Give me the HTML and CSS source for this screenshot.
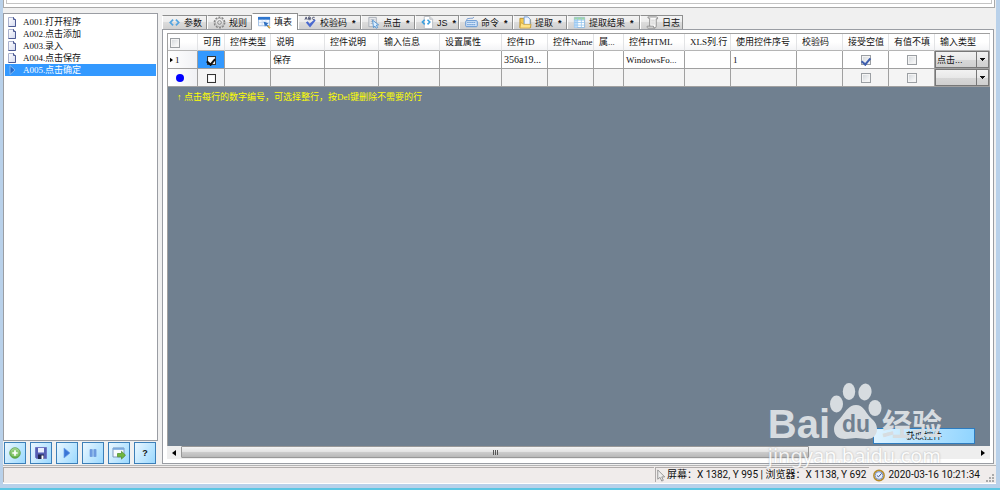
FILE: index.html
```html
<!DOCTYPE html>
<html lang="zh-CN">
<head>
<meta charset="utf-8">
<meta name="viewport" content="width=device-width, initial-scale=1">
<title>填表</title>
<link rel="stylesheet" href="styles.css">
</head>
<body>
<svg class="defs" aria-hidden="true">
  <defs>
    <linearGradient id="page" x1="0" y1="0" x2="1" y2="1"><stop offset="0" stop-color="#fff"/><stop offset="1" stop-color="#d3d9ef"/></linearGradient>
    <linearGradient id="green" x1="0" y1="0" x2="0" y2="1"><stop offset="0" stop-color="#b4dba2"/><stop offset="1" stop-color="#55a83a"/></linearGradient>
    <symbol id="doc" viewBox="0 0 10 12"><path d="M1.500 1.500h5l2 2v7h-7z" fill="url(#page)" stroke="#a9b0cd"/><path d="M6.500 1.200v2.300h2v7h-7" fill="none" stroke="#4d5a94"/></symbol>
    <symbol id="play" viewBox="0 0 12 12"><path d="M3 1l6 5-6 5z" fill="#3975d6" stroke="#6fa0ea" stroke-width=".7"/></symbol>
    <symbol id="code" viewBox="0 0 14 14"><path d="M5.500 4L2.500 7l3 3M8.500 4l3 3-3 3" fill="none" stroke="#55a5e0" stroke-width="1.900"/></symbol>
  </defs>
</svg>
<div class="window">
  <div class="top-box"><div class="top-inner"></div></div>
  <main class="main">
    <aside class="side">
      <ul class="steps">
        <li><button class="step"><svg><use href="#doc"/></svg><span class="code">A001.</span>打开程序</button></li>
        <li><button class="step"><svg><use href="#doc"/></svg><span class="code">A002.</span>点击添加</button></li>
        <li><button class="step"><svg><use href="#doc"/></svg><span class="code">A003.</span>录入</button></li>
        <li><button class="step"><svg><use href="#doc"/></svg><span class="code">A004.</span>点击保存</button></li>
        <li><button class="step selected"><svg viewBox="0 0 10 12"><path d="M3 1.500l5 4.500-5 4.500z" fill="#2569c9" stroke="#83b9f3"/></svg><span class="code">A005.</span>点击确定</button></li>
      </ul>
      <div class="tools">
        <button class="tool" aria-label="添加"><svg viewBox="0 0 12 12"><circle cx="6" cy="6" r="5.300" fill="url(#green)" stroke="#5b9f48" stroke-width=".8"/><circle cx="6" cy="6" r="3.600" fill="#8bcb73"/><path d="M6 3.300v5.400M3.300 6h5.400" stroke="#fff" stroke-width="1.700"/></svg></button>
        <button class="tool" aria-label="保存"><svg viewBox="0 0 12 12"><path d="M.5.500h11v11h-10l-1-1z" fill="#5560b4" stroke="#6f78c5"/><path d="M3 1h6v4.500H3z" fill="#e8eefc"/><path d="M3 7.500h6V12H3z" fill="#20274f"/><path d="M6.500 8.500H8.500V12h-2z" fill="#fff"/></svg></button>
        <button class="tool" aria-label="运行"><svg><use href="#play"/></svg></button>
        <button class="tool" aria-label="暂停"><svg viewBox="0 0 12 12"><path d="M3 2.500h2.300v7H3zM6.800 2.500h2.300v7H6.800z" fill="#729fe2" stroke="#5486d2" stroke-width=".5"/></svg></button>
        <button class="tool" aria-label="导出"><svg class="big" viewBox="0 0 14 14"><path d="M1 2h11v9H1z" fill="#f7faff" stroke="#7e99bd"/><path d="M1 1.800h11v2H1z" fill="#79a8dc"/><path d="M5.500 7.500h4V5.300l4 3.900-4 3.900v-2.300h-4z" fill="#70b63d" stroke="#4b8d29" stroke-width=".7"/></svg></button>
        <button class="tool help" aria-label="帮助">?</button>
      </div>
    </aside>
    <section class="content">
      <div class="tabs" role="tablist">
        <button class="tab t45" role="tab"><svg><use href="#code"/></svg>参数</button>
        <button class="tab t45" role="tab"><svg viewBox="0 0 14 14" fill="none" stroke="#858585"><circle cx="7" cy="7" r="5.600" stroke-width="1.500" stroke-dasharray="2.200 1.300"/><circle cx="7" cy="7" r="4.500" stroke="#aaa"/><circle cx="7" cy="7" r="2"/></svg>规则</button>
        <button class="tab active" role="tab" aria-selected="true"><svg viewBox="0 0 14 14"><path d="M.5 1.500h12v9H.5z" fill="#f2f8ff" stroke="#9bbbe2"/><path d="M0 1h13v3H0z" fill="#2f76ce"/><path d="M4.500 4v6M8.500 4v6M1 7h11" stroke="#bdd2ed" stroke-width=".7"/><path d="M6 6l5.500 2-2 1 3.500 3.500-1 1-3.500-3.500-1 1.500z" fill="#2e6fc0"/><path d="M10.500 10.500l2.500 2.500" stroke="#e7ac3a" stroke-width="1.700"/></svg>填表</button>
        <button class="tab t63" role="tab"><svg viewBox="0 0 14 14"><path d="M1 4l1.300-3L3.600 4M1.600 3h1.500M5 4V1h1.500q1 .7 0 1.500H5h2q.8 1-.3 1.500zM11.500 1.500Q9 .5 9 2.500T11.500 3.600" fill="none" stroke="#444c6c" stroke-width=".9"/><path d="M2 7l2-1.300 2 2.700 5.500-4.800 1 1.200L6.500 12.500z" fill="#4969cf"/></svg>校验码 <b>*</b></button>
        <button class="tab t54" role="tab"><svg viewBox="0 0 14 14"><path d="M2 1.500h8v10H2z" fill="#e6e8eb" stroke="#a7adb7"/><path d="M4 4h4M4 6h3M4 8h2" stroke="#aeb5c0"/><path d="M6 4.500l6.500 5-2.500.4 1.500 2.500-1.600.8L8.600 11 7 12.500z" fill="#dbeeff" stroke="#4289cd" stroke-width=".9"/></svg>点击 <b>*</b></button>
        <button class="tab t44" role="tab"><svg viewBox="0 0 14 14"><path d="M3.500.5h6l3 3v10h-9z" fill="#fff" stroke="#b8bdc4"/><path d="M9.500.5v3h3" fill="#ddd" stroke="#b8bdc4"/><path d="M4 4L1.500 6.500 4 9M7 4l2.500 2.500L7 9" fill="none" stroke="#3b9fdf" stroke-width="1.700"/></svg>JS <b>*</b></button>
        <button class="tab t54" role="tab"><svg viewBox="0 0 14 14"><path d="M1.500 5q0-3 4-2.500t4-1.500" fill="none" stroke="#769acf"/><rect x=".8" y="5" width="12.400" height="6.500" rx="1" fill="#d5e6fa" stroke="#5990d0"/><path d="M2.500 7h9M2.500 9.300h9" stroke="#5d93d0" stroke-width="1.200" stroke-dasharray="1.400 .8"/></svg>命令 <b>*</b></button>
        <button class="tab t54" role="tab"><svg viewBox="0 0 14 14"><path d="M1 2.500h4l1 1.500h6.500v8.500H1z" fill="#f4c84d" stroke="#ba8f2c"/><path d="M5.500 1h4l2.500 2.500v6h-6.500z" fill="#eef5ff" stroke="#6d9bd4"/><path d="M2 7l3 2h8l-1 4H1z" fill="#ffe287" stroke="#c39933" stroke-width=".7"/></svg>提取 <b>*</b></button>
        <button class="tab t73" role="tab"><svg viewBox="0 0 14 14"><path d="M1.500 1.500h11v11h-11z" fill="#fff" stroke="#8db8df"/><path d="M1.500 1.500h11v2.500h-11z" fill="#a2d8a1"/><path d="M1.500 4h3v8.500h-3z" fill="#b8dafa"/><path d="M5 2v10.500M9 2v10.500M1.500 4.500h11M1.500 7h11M1.500 9.800h11" stroke="#8fc2ed" stroke-width=".8"/></svg>提取结果 <b>*</b></button>
        <button class="tab t42" role="tab"><svg viewBox="0 0 14 14"><path d="M4 11V2.500Q2 3 2 1h9q2 0 1.500 2H11v8q0 2-2 2H2q-1.800-1-.5-2H8q0 2 1.500 2" fill="#fafafa" stroke="#888"/><path d="M5.500 4.500h4M5.500 6.500h4M5.500 8.500h4" stroke="#ccc"/></svg>日志</button>
      </div>
      <div class="panel">
        <div class="grid">
          <table>
            <colgroup><col class="c30"><col class="c27"><col class="c46"><col class="c54"><col class="c54"><col class="c61"><col class="c62"><col class="c46"><col class="c46"><col class="c30"><col class="c61"><col class="c46"><col class="c66"><col class="c46"><col class="c46"><col class="c46"><col class="c55"></colgroup>
            <thead>
              <tr><th class="all"><input type="checkbox" aria-label="全选"></th><th>可用</th><th>控件类型</th><th>说明</th><th>控件说明</th><th>输入信息</th><th>设置属性</th><th>控件<span class="latin">ID</span></th><th>控件<span class="latin">Name</span></th><th>属<span class="latin">...</span></th><th>控件<span class="latin">HTML</span></th><th><span class="latin">XLS</span>列<span class="latin">.</span>行</th><th>使用控件序号</th><th>校验码</th><th>接受空值</th><th>有值不填</th><th>输入类型</th></tr>
            </thead>
            <tbody>
              <tr><td class="num"><svg class="mark" viewBox="0 0 4 6"><path d="M0 0l4 3-4 3z"/></svg><span class="latin">1</span></td><td class="mid current"><input class="flat" type="checkbox" checked aria-label="可用"></td><td></td><td>保存</td><td></td><td></td><td></td><td><span class="latin wide">356a19...</span></td><td></td><td></td><td><span class="latin">WindowsFo...</span></td><td></td><td><span class="latin">1</span></td><td></td><td class="mid"><input type="checkbox" checked aria-label="接受空值"></td><td class="mid"><input type="checkbox" aria-label="有值不填"></td><td class="pick"><select aria-label="输入类型"><option>点击...</option></select></td></tr>
              <tr class="new"><td class="num"><span class="dot"></span></td><td class="mid"><input class="flat" type="checkbox" aria-label="可用"></td><td></td><td></td><td></td><td></td><td></td><td></td><td></td><td></td><td></td><td></td><td></td><td></td><td class="mid"><input type="checkbox" aria-label="接受空值"></td><td class="mid"><input type="checkbox" aria-label="有值不填"></td><td class="pick"><select aria-label="输入类型"><option></option></select></td></tr>
            </tbody>
          </table>
          <p class="hint"><span class="up">↑</span>点击每行的数字编号，可选择整行，按<span class="latin">Del</span>键删除不需要的行</p>
          <button class="fetch">获取控件</button>
        </div>
        <div class="scroll">
          <button class="arrow" aria-label="向左"><svg viewBox="0 0 4 6"><path d="M4 0L0 3l4 3z"/></svg></button>
          <div class="track"><div class="thumb"><i></i><i></i><i></i></div></div>
          <button class="arrow" aria-label="向右"><svg viewBox="0 0 4 6"><path d="M0 0l4 3-4 3z"/></svg></button>
        </div>
        <div class="watermark">
          <div class="brand">
            <span class="bai">Bai</span>
            <span class="paw"><svg viewBox="0 0 52 56"><g fill="currentColor"><ellipse cx="6.500" cy="21" rx="6.500" ry="8.500"/><ellipse cx="19" cy="8.500" rx="6.200" ry="8.500"/><ellipse cx="35" cy="9" rx="6.500" ry="8.500" transform="rotate(10 35 9)"/><ellipse cx="45" cy="25" rx="6.500" ry="8"/><path d="M26 22c7 0 9 6 13 11 4 4 8 7 8 13 0 7-5 10-10 10-4 0-7-1-11-1s-7 1-11 1C9 56 4 53 4 46c0-6 5-9 8-13 4-5 7-11 14-11z"/></g></svg><span class="du">du</span></span>
            <span class="jy">经验</span>
          </div>
          <div class="url">jingyan.baidu.com</div>
        </div>
      </div>
    </section>
  </main>
  <footer class="status">
    <div class="cell grow"></div>
    <div class="cell"><svg viewBox="0 0 10 14"><path d="M1.500 1v10l2.500-2 1.800 4 1.700-.8L5.800 8.500H9z" fill="#eee" stroke="#888" stroke-width=".9"/></svg>屏幕：X 1382, Y 995 | 浏览器：X 1138, Y 692</div>
    <div class="cell time"><svg viewBox="0 0 14 14"><circle cx="7" cy="7" r="6" fill="#dceafb" stroke="#b68c2a" stroke-width="1.800"/><circle cx="7" cy="7" r="4.500" fill="#e6f0ff" stroke="#6d84bb"/><path d="M4.500 7l2 1.500 3.500-4" fill="none" stroke="#3b4b7c" stroke-width="1.100"/></svg>2020-03-16 10:21:34</div>
    <svg class="grip" viewBox="0 0 8 8" fill="#aaa"><path d="M6 0h2v2H6zM3 3h2v2H3zM6 3h2v2H6zM0 6h2v2H0zM3 6h2v2H3zM6 6h2v2H6z"/></svg>
  </footer>
</div>
</body>
</html>
```

FILE: styles.css
```css
* { box-sizing: border-box; }

body {
  margin: 0;
  min-height: 100vh;
  display: flex;
  flex-direction: column;
  padding: 0 4px 4px 3px;
  border-bottom: 2px solid #5cc6e3;
  background: #b9d1ea;
  color: #111;
  font: 9px/12px "Liberation Sans", "Noto Sans CJK SC", sans-serif;
}

.defs { position: absolute; width: 0; height: 0; }
button, input, select { margin: 0; padding: 0; border: 0; border-radius: 0; background: none; color: inherit; font: inherit; }
.latin { font-family: "Liberation Serif", serif; }
.wide { font-size: 10px; }

.window { flex: 1; display: flex; flex-direction: column; background: #f0f0f0; }

.top-box { height: 8px; margin-right: 1px; padding: 0 2px 3px; border: 1px solid #a9a9a9; border-top: 0; background: #fff; }
.top-inner { height: 4px; border: 1px solid #c4c4c4; border-top: 0; }

.main { flex: 1; display: flex; gap: 4px; padding: 5px 2px 1px 0; }

/* step list */
.side { width: 155px; display: flex; flex-direction: column; gap: 1px; }
.steps { flex: 1; display: flex; flex-direction: column; margin: 0; padding: 2px 1px 1px; list-style: none; border: 1px solid #9a9da3; background: #fff; }
.step { display: flex; align-items: center; width: 100%; height: 12px; padding-left: 2px; text-align: left; white-space: nowrap; }
.step svg { width: 10px; height: 12px; margin-right: 6px; }
.step .code { width: 22px; font-family: "Liberation Serif", serif; }
.step.selected { background: #3399ff; color: #fff; }

.tools { display: flex; gap: 4px; padding: 0 1px; }
.tool { width: 22px; height: 22px; display: grid; place-items: center; border: 1px solid #3c7fb8; background: linear-gradient(120deg, #eaf7ff, #9bd9ff); }
.tool svg { width: 12px; height: 12px; }
.tool svg.big { width: 14px; height: 14px; }
.tool.help { font-weight: bold; }

/* tabs */
.content { flex: 1; min-width: 0; display: flex; flex-direction: column; }
.tabs { position: relative; z-index: 1; display: flex; align-items: flex-end; height: 16px; }
.tab {
  display: flex; align-items: center; gap: 3px;
  height: 14px; padding-left: 5px;
  border: 1px solid #8e8f8f; border-left-color: #fff; border-bottom: 0;
  background: linear-gradient(#f3f3f3, #ebebeb 50%, #dcdcdc 50%, #d0d0d0);
  white-space: nowrap;
}
.tab svg { width: 13px; height: 13px; }
.tab b { margin-left: 2px; }
.tab.active { width: 46px; height: 17px; margin-bottom: -1px; background: #fff; }
.t42 { width: 43px; }
.t44 { width: 44px; }
.t45 { width: 45px; }
.t54 { width: 54px; }
.t63 { width: 63px; }
.t73 { width: 73px; }

.panel { position: relative; flex: 1; display: flex; flex-direction: column; padding: 3px 3px 4px 4px; border: 1px solid #9a9da3; background: #fff; }
.grid { position: relative; flex: 1; border-top: 1px solid #a0a0a0; border-left: 1px solid #a0a0a0; background: #708090; }

table { width: 100%; table-layout: fixed; border-collapse: separate; border-spacing: 0; background: #fff; }
.c27 { width: 27px; }
.c30 { width: 30px; }
.c46 { width: 46px; }
.c54 { width: 54px; }
.c55 { width: 55px; }
.c61 { width: 61px; }
.c62 { width: 62px; }
.c66 { width: 66px; }
th, td { padding: 0; overflow: hidden; white-space: nowrap; text-align: left; }
th { height: 17px; padding-left: 5px; border-right: 1px solid #e2e3e5; border-bottom: 1px solid #b5b5b5; background: linear-gradient(#fff 50%, #f3f4f6); font-weight: normal; }
td { height: 18px; padding-left: 2px; border-right: 1px solid #a0a0a0; border-bottom: 1px solid #a0a0a0; }
th.all { padding-left: 2px; }
.new td { background: #f4f4f4; }
.mid { padding: 0; text-align: center; }
td.current { background: #3399ff; }
td.num { background: linear-gradient(90deg, #fff, #f0f1f4); }
.mark { width: 3px; height: 6px; margin-right: 2px; vertical-align: middle; }
.dot { display: block; width: 8px; height: 8px; margin-left: 6px; border-radius: 50%; background: #00f; }

input[type="checkbox"] { appearance: none; display: inline-block; width: 10px; height: 10px; border: 1px solid #9b9fa3; background: linear-gradient(135deg, #d2d6da, #fff); box-shadow: inset 0 0 0 1px #f4f4f4; vertical-align: middle; }
input[type="checkbox"].flat { width: 9px; height: 9px; border-color: #333; background: #fff; }
input[type="checkbox"]:checked::after { content: ""; display: block; width: 4px; height: 7px; margin: 0 auto; border: solid #3f5fae; border-width: 0 2px 2px 0; transform: rotate(40deg); }
input.flat[type="checkbox"]:checked::after { height: 6px; border-color: #111; }

td.pick { padding: 0; }
select {
  appearance: none; display: block; width: 100%; height: 17px; padding-left: 1px;
  border: 1px solid #777;
  background:
    linear-gradient(#111, #111) right 3px top 6px / 5px 1px no-repeat,
    linear-gradient(#111, #111) right 4px top 7px / 3px 1px no-repeat,
    linear-gradient(#111, #111) right 5px top 8px / 1px 1px no-repeat,
    linear-gradient(#777, #777) right 11px top 0 / 1px 100% no-repeat,
    linear-gradient(#f2f2f2, #e8e8e8 50%, #d8d8d8 50%, #cfcfcf);
}

.hint { margin: 0; padding: 4px 9px; color: #ff0; }
.up { display: inline-block; width: 7px; }
.fetch { position: absolute; right: 15px; bottom: 2px; width: 102px; height: 16px; border: 1px solid #2d7cc0; background: linear-gradient(100deg, #dff3ff, #8fd4ff); }

/* horizontal scroll bar */
.scroll { display: flex; height: 13px; background: #eee; }
.arrow { width: 14px; display: grid; place-items: center; }
.arrow svg { width: 4px; height: 6px; }
.track { flex: 1; }
.thumb { width: 79%; height: 12px; display: flex; align-items: center; justify-content: center; gap: 1px; border: 1px solid #989898; border-radius: 1px; background: linear-gradient(#f4f4f4, #e3e3e3 45%, #cdcdcd 50%, #b8b8b8); }
.thumb i { width: 1px; height: 5px; background: #555; }

.watermark { position: absolute; right: 48px; bottom: -6px; color: #d7dce0; pointer-events: none; }
.brand { display: flex; align-items: flex-end; margin-right: 3px; }
.bai { font: bold 40px/38px "Liberation Sans", sans-serif; }
.paw { position: relative; width: 52px; height: 56px; margin-bottom: 4px; }
.paw svg { display: block; width: 52px; height: 56px; }
.du { position: absolute; left: 12px; bottom: 3px; color: #708090; font: bold 23px/24px "Liberation Sans", sans-serif; }
.jy { font: bold 30px/42px "Noto Sans CJK SC", sans-serif; }
.url { color: #fff; font: 20px/26px "Noto Sans", sans-serif; text-shadow: 0 0 2px #999; opacity: .8; }

.status { display: flex; align-items: stretch; height: 19px; padding: 1px 2px 1px 0; border-top: 1px solid #b5b5b5; border-bottom: 1px solid #fff; background: #f0eceb; font: 10px/14px Roboto, "Noto Sans CJK SC", sans-serif; }
.cell { display: flex; align-items: center; gap: 1px; padding-right: 3px; border-top: 1px solid #b0acab; border-left: 1px solid #b0acab; white-space: nowrap; }
.cell svg { width: 10px; height: 13px; }
.grow { flex: 1; margin-right: 1px; }
.time { gap: 3px; padding-left: 3px; border-color: transparent; }
.time svg { width: 12px; }
.grip { align-self: flex-end; width: 8px; height: 8px; margin-left: 3px; }
```
